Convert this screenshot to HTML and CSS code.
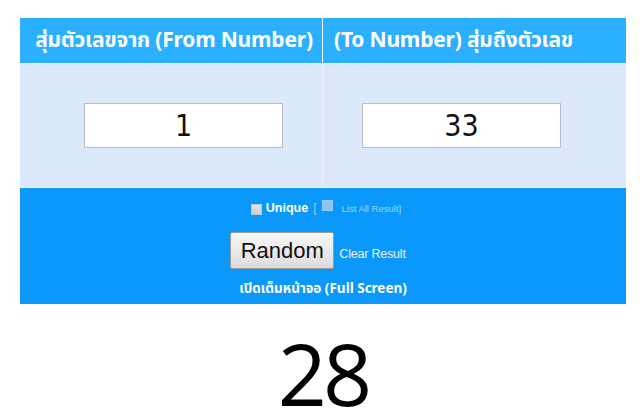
FILE: index.html
```html
<!DOCTYPE html>
<html lang="th">
<head>
<meta charset="utf-8">
<title>สุ่มตัวเลข</title>
<link rel="stylesheet" href="styles.css">
</head>
<body>
<div class="board">
  <div class="head head-from">สุ่มตัวเลขจาก (From Number)</div>
  <div class="head head-to">(To Number) สุ่มถึงตัวเลข</div>
  <div class="cell cell-from"><input class="num" type="text" value="1"></div>
  <div class="cell cell-to"><input class="num" type="text" value="33"></div>
  <div class="controls">
    <div class="opts">
      <span class="cb"></span><span class="unique">Unique</span><span class="br">[</span><span class="cb cb-off"></span><span class="list">List All Result]</span>
    </div>
    <div class="actions">
      <button class="random" type="button">Random</button>
      <a class="clear" href="#">Clear Result</a>
    </div>
    <div class="full">เปิดเต็มหน้าจอ (Full Screen)</div>
  </div>
</div>
<div class="result">28</div>
</body>
</html>
```
FILE: styles.css
```css
html, body {
  margin: 0;
  padding: 0;
  background: #ffffff;
}
body {
  font-family: "Noto Sans", "Noto Sans Thai", "Liberation Sans", sans-serif;
  padding: 18px 0 0 20px;
}
.board {
  width: 606px;
  display: grid;
  grid-template-columns: 302px 303px;
  grid-template-rows: 45px 123px 116px;
  gap: 1px;
  background: #eaf5ff;
}
.head {
  background: #2bb0ff;
  color: #ffffff;
  font-weight: bold;
  font-size: 21px;
  letter-spacing: -0.2px;
  display: flex;
  align-items: center;
  white-space: nowrap;
}
.head-from {
  justify-content: center;
  padding-left: 6px;
}
.head-to {
  padding-left: 11px;
}
.cell {
  background: #dbe9fb;
  display: flex;
  align-items: center;
}
.cell-from {
  padding-left: 64px;
}
.cell-to {
  padding-left: 39px;
}
.num {
  box-sizing: border-box;
  width: 199px;
  height: 45px;
  border: 1px solid #b9bec6;
  background: #ffffff;
  margin: 0;
  padding: 0;
  text-align: center;
  font-family: "DejaVu Sans Condensed", "DejaVu Sans", sans-serif;
  font-size: 30px;
  color: #111111;
  outline: none;
}
.controls {
  grid-column: 1 / 3;
  background: #0a98fb;
  display: flex;
  flex-direction: column;
  align-items: center;
}
.opts {
  margin-top: 13px;
  height: 14px;
  display: flex;
  align-items: center;
  font-family: "Liberation Sans", sans-serif;
  padding-left: 6px;
}
.cb {
  display: inline-block;
  box-sizing: border-box;
  width: 11px;
  height: 11px;
  background: linear-gradient(#e4e4e4, #cfcfcf);
  border: 1px solid #bfc6cc;
  margin-right: 4px;
  position: relative;
  top: 1px;
}
.cb-off {
  background: #86c6f6;
  border-color: #9acdf4;
  top: -3px;
  margin-left: 5px;
  margin-right: 9px;
}
.unique {
  color: #ffffff;
  font-weight: bold;
  font-size: 12.5px;
}
.br {
  color: #8cccfb;
  font-size: 12px;
  margin-left: 5px;
}
.list {
  color: #a3d5fc;
  font-size: 9.5px;
}
.actions {
  margin-top: 17px;
  display: flex;
  align-items: center;
  padding-right: 10px;
}
.random {
  box-sizing: border-box;
  width: 104px;
  height: 37px;
  margin: 0;
  padding: 0;
  border: 1px solid #9a9a9a;
  border-radius: 2px;
  background: linear-gradient(#f7f7f7, #dcdcdc);
  font-family: "Liberation Sans", Arial, sans-serif;
  font-size: 22px;
  color: #111111;
}
.clear {
  margin-left: 5px;
  margin-top: 6px;
  color: #e8f5ff;
  font-family: "Liberation Sans", sans-serif;
  font-size: 12.5px;
  text-decoration: none;
  letter-spacing: -0.2px;
}
.full {
  margin-top: 11px;
  line-height: 16px;
  color: #ffffff;
  font-weight: bold;
  font-size: 13.5px;
}
.result {
  width: 606px;
  margin-top: 34px;
  text-align: center;
  font-family: "Open Sans", sans-serif;
  font-size: 86px;
  line-height: 70px;
  height: 70px;
  color: #000000;
  letter-spacing: -4px;
}
```
